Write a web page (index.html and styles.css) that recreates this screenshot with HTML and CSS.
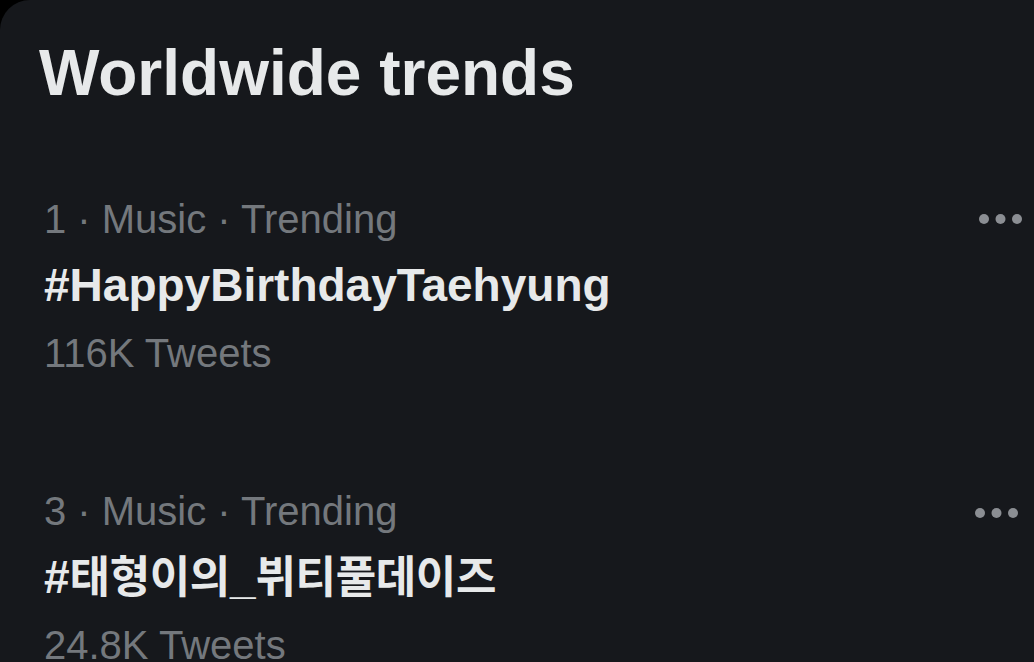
FILE: index.html
```html
<!DOCTYPE html>
<html lang="en">
<head>
<meta charset="utf-8">
<title>Worldwide trends</title>
<link rel="stylesheet" href="styles.css">
</head>
<body>
<main class="panel">
  <h1 class="title">Worldwide trends</h1>
  <section class="trends">
    <article class="trend">
      <div class="trend-text">
        <div class="meta">1 · Music · Trending</div>
        <div class="tag">#HappyBirthdayTaehyung</div>
        <div class="count">116K Tweets</div>
      </div>
      <div class="more" aria-label="More">
        <svg width="45" height="12" viewBox="0 0 45 12"><circle cx="6" cy="6" r="5"/><circle cx="22.5" cy="6" r="5"/><circle cx="39" cy="6" r="5"/></svg>
      </div>
    </article>
    <article class="trend second">
      <div class="trend-text">
        <div class="meta">3 · Music · Trending</div>
        <div class="tag">#<span class="ko">태형이의</span>_<span class="ko">뷔티풀데이즈</span></div>
        <div class="count">24.8K Tweets</div>
      </div>
      <div class="more shifted" aria-label="More">
        <svg width="45" height="12" viewBox="0 0 45 12"><circle cx="6" cy="6" r="5"/><circle cx="22.5" cy="6" r="5"/><circle cx="39" cy="6" r="5"/></svg>
      </div>
    </article>
  </section>
</main>
</body>
</html>
```

FILE: styles.css
```css
html, body {
  margin: 0;
  padding: 0;
  background: #000;
}
body {
  width: 1034px;
  height: 662px;
  overflow: hidden;
  font-family: "Liberation Sans", Arial, "Noto Sans CJK KR", sans-serif;
}
.panel {
  box-sizing: border-box;
  width: 1034px;
  height: 662px;
  background: #16181c;
  border-top-left-radius: 30px;
  padding: 35px 11px 0 44px;
  overflow: hidden;
}
.title {
  margin: 0 0 0 -5px;
  font-size: 64px;
  line-height: 76px;
  font-weight: 700;
  color: #e7e9ea;
}
.trends {
  margin-top: 84px;
}
.trend {
  display: flex;
  justify-content: space-between;
  align-items: flex-start;
}
.trend.second {
  margin-top: 110px;
}
.meta, .count {
  font-size: 40px;
  line-height: 48px;
  color: #74787d;
}
.tag {
  margin-top: 14px;
  font-size: 46px;
  line-height: 56px;
  font-weight: 700;
  color: #e7e9ea;
}
.ko {
  font-family: "Noto Sans CJK KR", sans-serif;
  font-size: 44px;
  line-height: 1;
  letter-spacing: -0.4px;
}
.count {
  margin-top: 16px;
}
.more {
  height: 48px;
  display: flex;
  align-items: center;
  fill: #8b8e93;
}
.more.shifted {
  margin-right: 4px;
  margin-top: 2px;
}
```
